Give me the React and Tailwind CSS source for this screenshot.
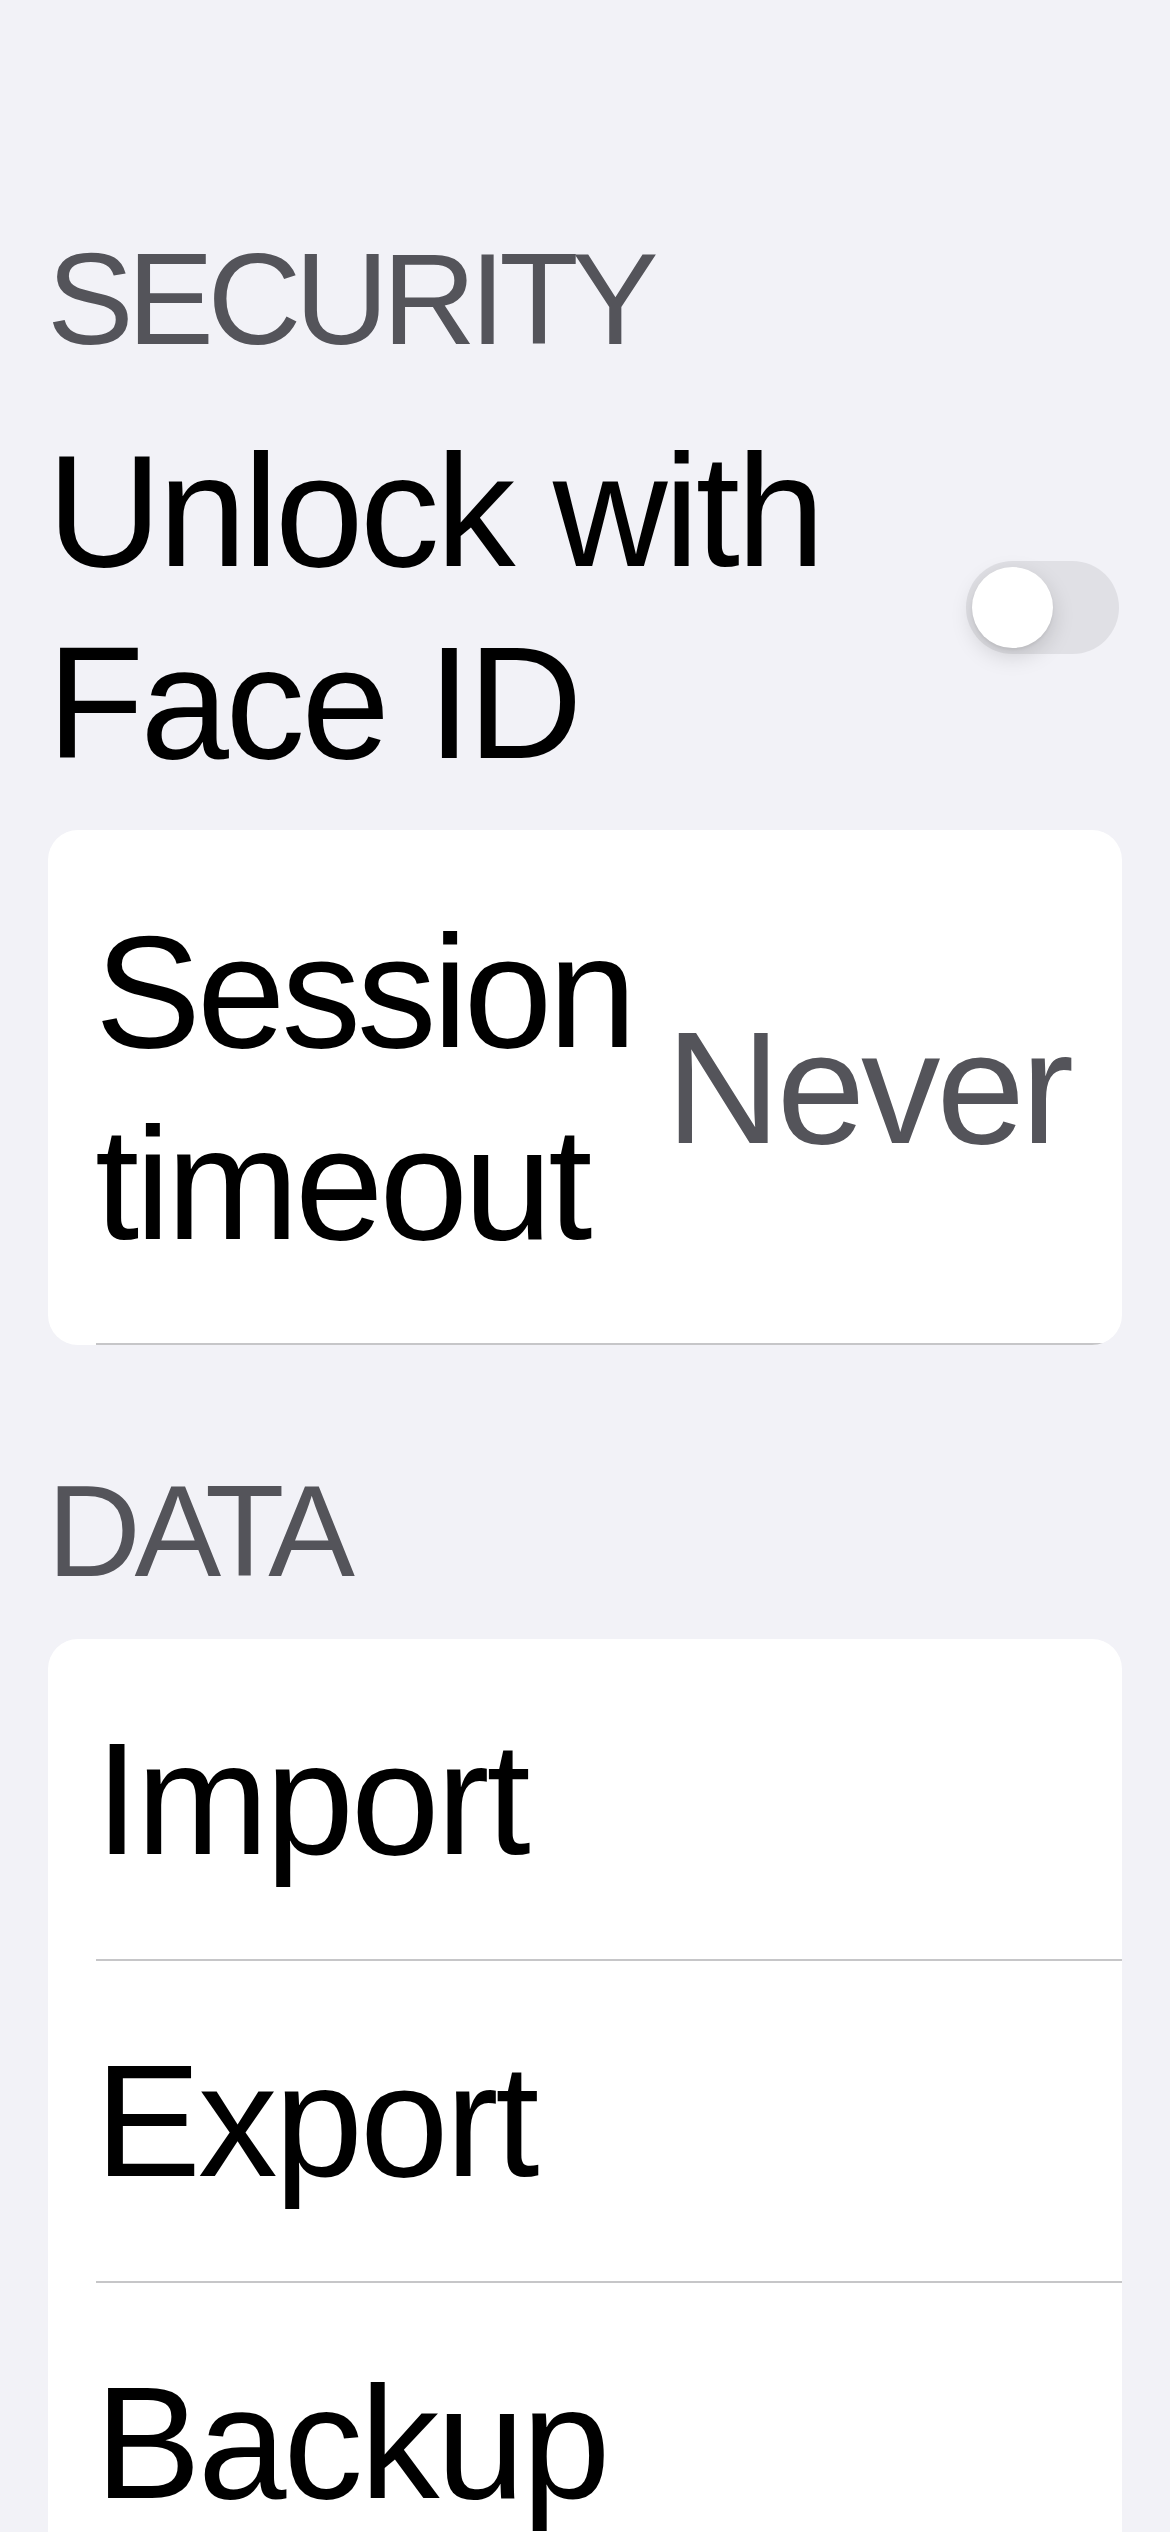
import React, { useState } from "react";

const Toggle = ({ on, onChange }) => (
  <button
    type="button"
    onClick={() => onChange(!on)}
    className={`mr-[3px] flex h-[93px] w-[153px] shrink-0 items-center rounded-full px-[6px] ${
      on ? "justify-end bg-[#34c759]" : "justify-start bg-[#e0e0e5]"
    }`}
  >
    <span className="block h-[81px] w-[81px] rounded-full bg-white shadow-[0_8px_22px_rgba(0,0,0,0.15),0_2px_3px_rgba(0,0,0,0.06)]" />
  </button>
);

const Separator = () => <div className="ml-[48px] h-[2px] bg-[#c6c6c8]" />;

const SectionHeader = ({ children, className = "" }) => (
  <div className={`pl-[47px] text-[130px] leading-[156px] tracking-[-6.5px] text-[#54545a] ${className}`}>
    {children}
  </div>
);

const App = () => {
  const [faceId, setFaceId] = useState(false);
  const dataRows = ["Import", "Export", "Backup"];

  return (
    <div className="min-h-[2532px] overflow-hidden bg-[#f2f2f7] font-['Liberation_Sans',Arial,sans-serif] text-black">
      <SectionHeader className="pt-[221px]">SECURITY</SectionHeader>

      {/* toggle row sits on the grouped background */}
      <div className="ml-[47px] mr-[48px] mt-[38px] flex items-center justify-between gap-[40px]">
        <span className="min-w-0 text-[159px] leading-[192px] tracking-[-3.5px]">Unlock with Face ID</span>
        <Toggle on={faceId} onChange={setFaceId} />
      </div>

      <div className="mx-[48px] mt-[31px] overflow-hidden rounded-[30px] bg-white">
        <div className="flex items-center justify-between gap-[30px] pb-[63px] pl-[47px] pr-[52px] pt-[66px]">
          <span className="min-w-0 text-[159px] leading-[192px] tracking-[-4px]">Session timeout</span>
          <span className="shrink-0 text-[159px] leading-[192px] tracking-[-4px] text-[#54545a]">Never</span>
        </div>
        <Separator />
      </div>

      <SectionHeader className="mt-[108px]">DATA</SectionHeader>

      <div className="mx-[48px] mt-[30px] overflow-hidden rounded-t-[30px] bg-white">
        {dataRows.map((label, i) => (
          <div key={label}>
            <div className="py-[64px] pl-[47px] text-[159px] leading-[192px] tracking-[-3px]">{label}</div>
            {i < dataRows.length - 1 && <Separator />}
          </div>
        ))}
      </div>
    </div>
  );
};

export default App;
